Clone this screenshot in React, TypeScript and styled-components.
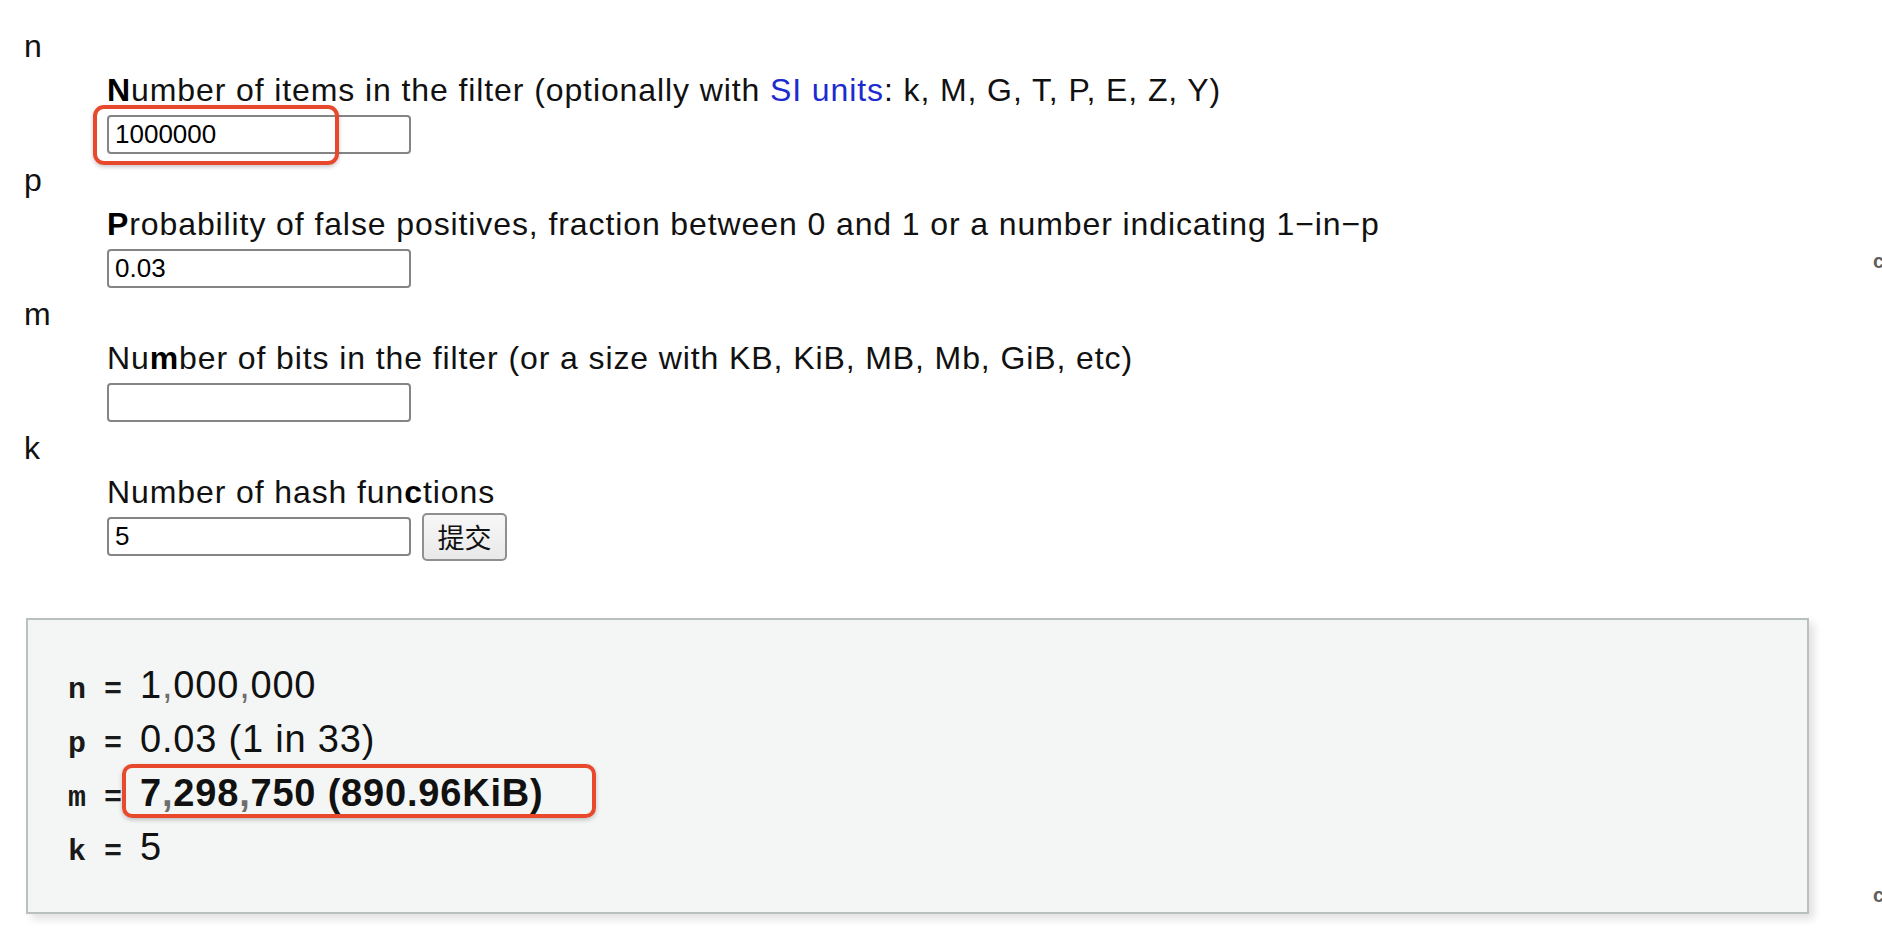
import React from "react";
import styled, { createGlobalStyle } from "styled-components";

const GlobalStyle = createGlobalStyle`
  html, body {
    margin: 0;
    padding: 0;
    background: #ffffff;
  }
  body {
    font-family: "Liberation Sans", Arial, "Noto Sans CJK SC", sans-serif;
    color: #111111;
  }
`;

const Root = styled.div`
  display: flex;
  width: 1882px;
  height: 950px;
  overflow: hidden;
`;

const Main = styled.main`
  flex: 1;
  padding: 24px 0 0 24px;
`;

const Edge = styled.aside`
  width: 9px;
  overflow: hidden;
  padding-top: 251px;
  display: flex;
  flex-direction: column;
`;

const EdgeGlyph = styled.span<{ $gap?: number }>`
  display: block;
  font-size: 20px;
  line-height: 20px;
  font-weight: 700;
  color: #5f5f5f;
  margin-top: ${(p) => p.$gap ?? 0}px;
`;

const Fields = styled.dl`
  margin: 0;
`;

const Term = styled.dt`
  font-size: 32px;
  line-height: 44px;
  letter-spacing: 0.9px;
  color: #111;
`;

const Desc = styled.dd`
  margin: 0 0 0 83px;
  display: flex;
  flex-direction: column;
`;

const Hint = styled.div`
  font-size: 32px;
  line-height: 44px;
  letter-spacing: 0.9px;
  color: #111;
  white-space: nowrap;
`;

const Key = styled.b`
  font-weight: 700;
  color: #000;
`;

const Link = styled.a`
  color: #1b2bcf;
  text-decoration: none;
`;

const FieldRow = styled.div`
  display: flex;
  align-items: center;
  gap: 11px;
  height: 39px;
  margin: 3px 0 4px;
`;

const InputWrap = styled.span<{ $marked?: boolean }>`
  position: relative;
  display: inline-flex;
  &::after {
    content: "";
    display: ${(p) => (p.$marked ? "block" : "none")};
    position: absolute;
    left: -14px;
    top: -10px;
    width: 246px;
    height: 60px;
    box-sizing: border-box;
    border: 4px solid #e8482c;
    border-radius: 11px;
    box-shadow: 0 2px 4px rgba(0, 0, 0, 0.22);
    pointer-events: none;
  }
`;

const TextInput = styled.input`
  box-sizing: border-box;
  width: 304px;
  height: 39px;
  margin: 0;
  padding: 0 6px;
  border: 2px solid #858585;
  border-radius: 4px;
  background: #fff;
  font-family: "Liberation Sans", Arial, sans-serif;
  font-size: 26px;
  color: #000;
  outline: none;
`;

const SubmitButton = styled.button`
  box-sizing: border-box;
  width: 85px;
  height: 48px;
  flex: none;
  padding: 0;
  border: 2px solid #8f8f8f;
  border-radius: 5px;
  background: linear-gradient(#f7f7f7, #e9e9e9);
  font-family: "Noto Sans CJK SC", "Liberation Sans", sans-serif;
  font-size: 27px;
  line-height: 1;
  color: #111;
`;

const Panel = styled.section`
  box-sizing: border-box;
  margin: 58px 0 0 2px;
  width: 1783px;
  padding: 38px 40px;
  background: #f4f6f5;
  border: 2px solid #b9c0be;
  box-shadow: 5px 5px 8px rgba(0, 0, 0, 0.12);
`;

const ResultLine = styled.div<{ $strong?: boolean }>`
  display: flex;
  align-items: baseline;
  height: 54px;
  line-height: 54px;
  font-weight: ${(p) => (p.$strong ? 700 : 400)};
`;

const Sym = styled.span`
  font-family: "Liberation Mono", "Courier New", monospace;
  font-size: 30px;
  font-weight: 700;
  white-space: pre;
  color: #1a1a1a;
`;

const Value = styled.span<{ $marked?: boolean }>`
  position: relative;
  font-family: "Liberation Sans", Arial, sans-serif;
  font-size: 38px;
  letter-spacing: 0.8px;
  color: #111;
  &::after {
    content: "";
    display: ${(p) => (p.$marked ? "block" : "none")};
    position: absolute;
    left: -18px;
    top: -2px;
    width: 474px;
    height: 54px;
    box-sizing: border-box;
    border: 4px solid #e8482c;
    border-radius: 10px;
    box-shadow: 0 2px 4px rgba(0, 0, 0, 0.22);
    pointer-events: none;
  }
`;

const Sep = styled.span`
  color: #6e6e6e;
`;

function Grouped({ text }: { text: string }) {
  const parts = text.split(",");
  return (
    <>
      {parts.map((p, i) => (
        <React.Fragment key={i}>
          {i > 0 && <Sep>,</Sep>}
          {p}
        </React.Fragment>
      ))}
    </>
  );
}

export default function App() {
  return (
    <>
      <GlobalStyle />
      <Root>
        <Main>
          <Fields>
            <Term>n</Term>
            <Desc>
              <Hint>
                <Key>N</Key>umber of items in the filter (optionally with{" "}
                <Link href="#">SI units</Link>: k, M, G, T, P, E, Z, Y)
              </Hint>
              <FieldRow>
                <InputWrap $marked>
                  <TextInput defaultValue="1000000" />
                </InputWrap>
              </FieldRow>
            </Desc>

            <Term>p</Term>
            <Desc>
              <Hint>
                <Key>P</Key>robability of false positives, fraction between 0
                and 1 or a number indicating 1−in−p
              </Hint>
              <FieldRow>
                <InputWrap>
                  <TextInput defaultValue="0.03" />
                </InputWrap>
              </FieldRow>
            </Desc>

            <Term>m</Term>
            <Desc>
              <Hint>
                Nu<Key>m</Key>ber of bits in the filter (or a size with KB, KiB,
                MB, Mb, GiB, etc)
              </Hint>
              <FieldRow>
                <InputWrap>
                  <TextInput defaultValue="" />
                </InputWrap>
              </FieldRow>
            </Desc>

            <Term>k</Term>
            <Desc>
              <Hint>
                Number of hash fun<Key>c</Key>tions
              </Hint>
              <FieldRow>
                <InputWrap>
                  <TextInput defaultValue="5" />
                </InputWrap>
                <SubmitButton type="button">提交</SubmitButton>
              </FieldRow>
            </Desc>
          </Fields>

          <Panel>
            <ResultLine>
              <Sym>n = </Sym>
              <Value>
                <Grouped text="1,000,000" />
              </Value>
            </ResultLine>
            <ResultLine>
              <Sym>p = </Sym>
              <Value>0.03 (1 in 33)</Value>
            </ResultLine>
            <ResultLine $strong>
              <Sym>m = </Sym>
              <Value $marked>
                <Grouped text="7,298,750" /> (890.96KiB)
              </Value>
            </ResultLine>
            <ResultLine>
              <Sym>k = </Sym>
              <Value>5</Value>
            </ResultLine>
          </Panel>
        </Main>
        <Edge>
          <EdgeGlyph>c</EdgeGlyph>
          <EdgeGlyph $gap={614}>c</EdgeGlyph>
        </Edge>
      </Root>
    </>
  );
}
